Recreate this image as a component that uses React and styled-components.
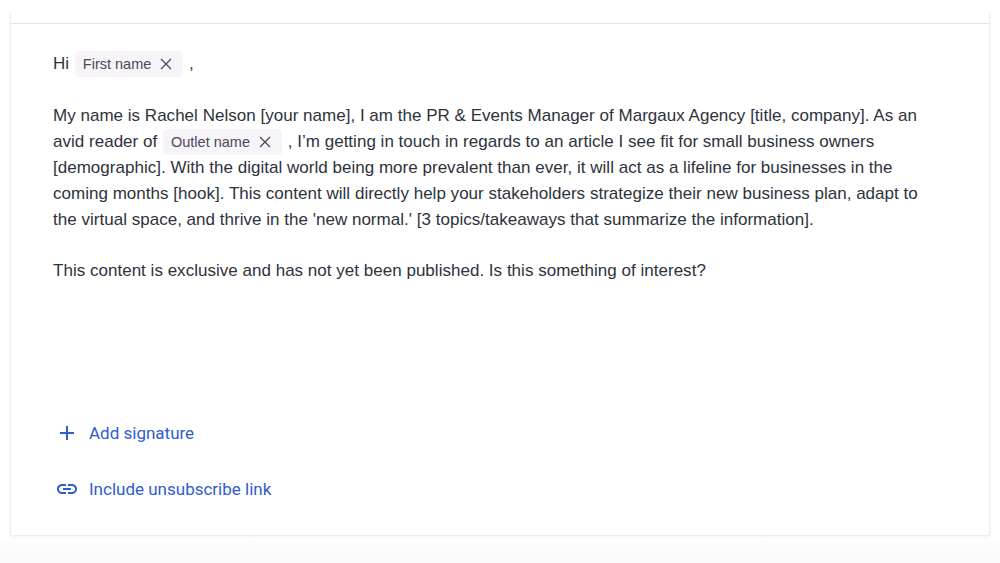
import React from 'react';
import styled, { createGlobalStyle } from 'styled-components';

const Global = createGlobalStyle`
html, body {
  margin: 0;
  padding: 0;
  background: #fff;
}
`

const Page = styled.div`
width: 1000px;
height: 563px;
overflow: hidden;
background: linear-gradient(#fff 0, #fff 538px, #fbfbfc 548px);
padding: 13px 10px 0;
box-sizing: border-box;
`
const Card = styled.section`
height: 523px;
box-sizing: border-box;
background: #fff;
border: 1px solid #ecebf6;
border-top: none;
border-radius: 0 0 3px 3px;
box-shadow: 0 1px 3px rgba(60, 60, 130, 0.07);
display: flex;
flex-direction: column;
`
const TopRule = styled.div`
height: 10px;
flex: none;
border-bottom: 1px solid #e4e4ea;
`
const Body = styled.div`
flex: 1;
display: flex;
flex-direction: column;
padding: 27px 42px 0;
font-family: "Liberation Sans", Arial, sans-serif;
font-size: 17px;
letter-spacing: 0.02px;
line-height: 26px;
color: #2e323d;
`
const Para = styled.p`
margin: 0 0 25.5px;
width: 880px;
`
const Chip = styled.span`
display: inline-flex;
align-items: center;
height: 26px;
vertical-align: top;
margin: 0 1px;
padding: 0 11px 0 8px;
gap: 9px;
border-radius: 4px;
background: #f6f4f8;
color: #4f4659;
font-size: 14.5px;
letter-spacing: 0;
`
const Links = styled.div`
margin-top: auto;
padding-bottom: 33px;
display: flex;
flex-direction: column;
gap: 30px;
`
const Action = styled.a`
display: flex;
align-items: center;
height: 26px;
gap: 10px;
padding-left: 2px;
color: #2f5cd2;
font-family: Roboto, Arial, sans-serif;
font-size: 17px;
letter-spacing: 0;
cursor: pointer;
`
const Close = () => (
  <svg width="12" height="12" viewBox="0 0 12 12" fill="none" stroke="#4f4659" strokeWidth="1.3">
    <path d="M1 1l10 10M11 1L1 11" />
  </svg>
)
const Plus = () => (
  <svg width="24" height="24" viewBox="0 0 24 24" fill="#2f5cd2">
    <path d="M19 13h-6v6h-2v-6H5v-2h6V5h2v6h6v2z" />
  </svg>
)
const Chain = () => (
  <svg width="24" height="24" viewBox="0 0 24 24" fill="#2f5cd2">
    <path d="M3.9 12c0-1.71 1.39-3.1 3.1-3.1h4V7H7c-2.76 0-5 2.24-5 5s2.24 5 5 5h4v-1.9H7c-1.71 0-3.1-1.39-3.1-3.1zM8 13h8v-2H8v2zm9-6h-4v1.9h4c1.71 0 3.1 1.39 3.1 3.1s-1.39 3.1-3.1 3.1h-4V17h4c2.76 0 5-2.24 5-5s-2.24-5-5-5z" />
  </svg>
)

const App = () => {
  return (
    <Page>
      <Global />
      <Card>
        <TopRule />
        <Body>
          <Para>Hi <Chip>First name <Close /></Chip> ,</Para>
          <Para>
            My name is Rachel Nelson [your name], I am the PR &amp; Events Manager of Margaux Agency [title, company]. As an avid reader of <Chip>Outlet name <Close /></Chip> , I’m getting in touch in regards to an article I see fit for small business owners [demographic]. With the digital world being more prevalent than ever, it will act as a lifeline for businesses in the coming months [hook]. This content will directly help your stakeholders strategize their new business plan, adapt to the virtual space, and thrive in the 'new normal.' [3 topics/takeaways that summarize the information].
          </Para>
          <Para>This content is exclusive and has not yet been published. Is this something of interest?</Para>
          <Links>
            <Action><Plus />Add signature</Action>
            <Action><Chain />Include unsubscribe link</Action>
          </Links>
        </Body>
      </Card>
    </Page>
  )
}

export default App
